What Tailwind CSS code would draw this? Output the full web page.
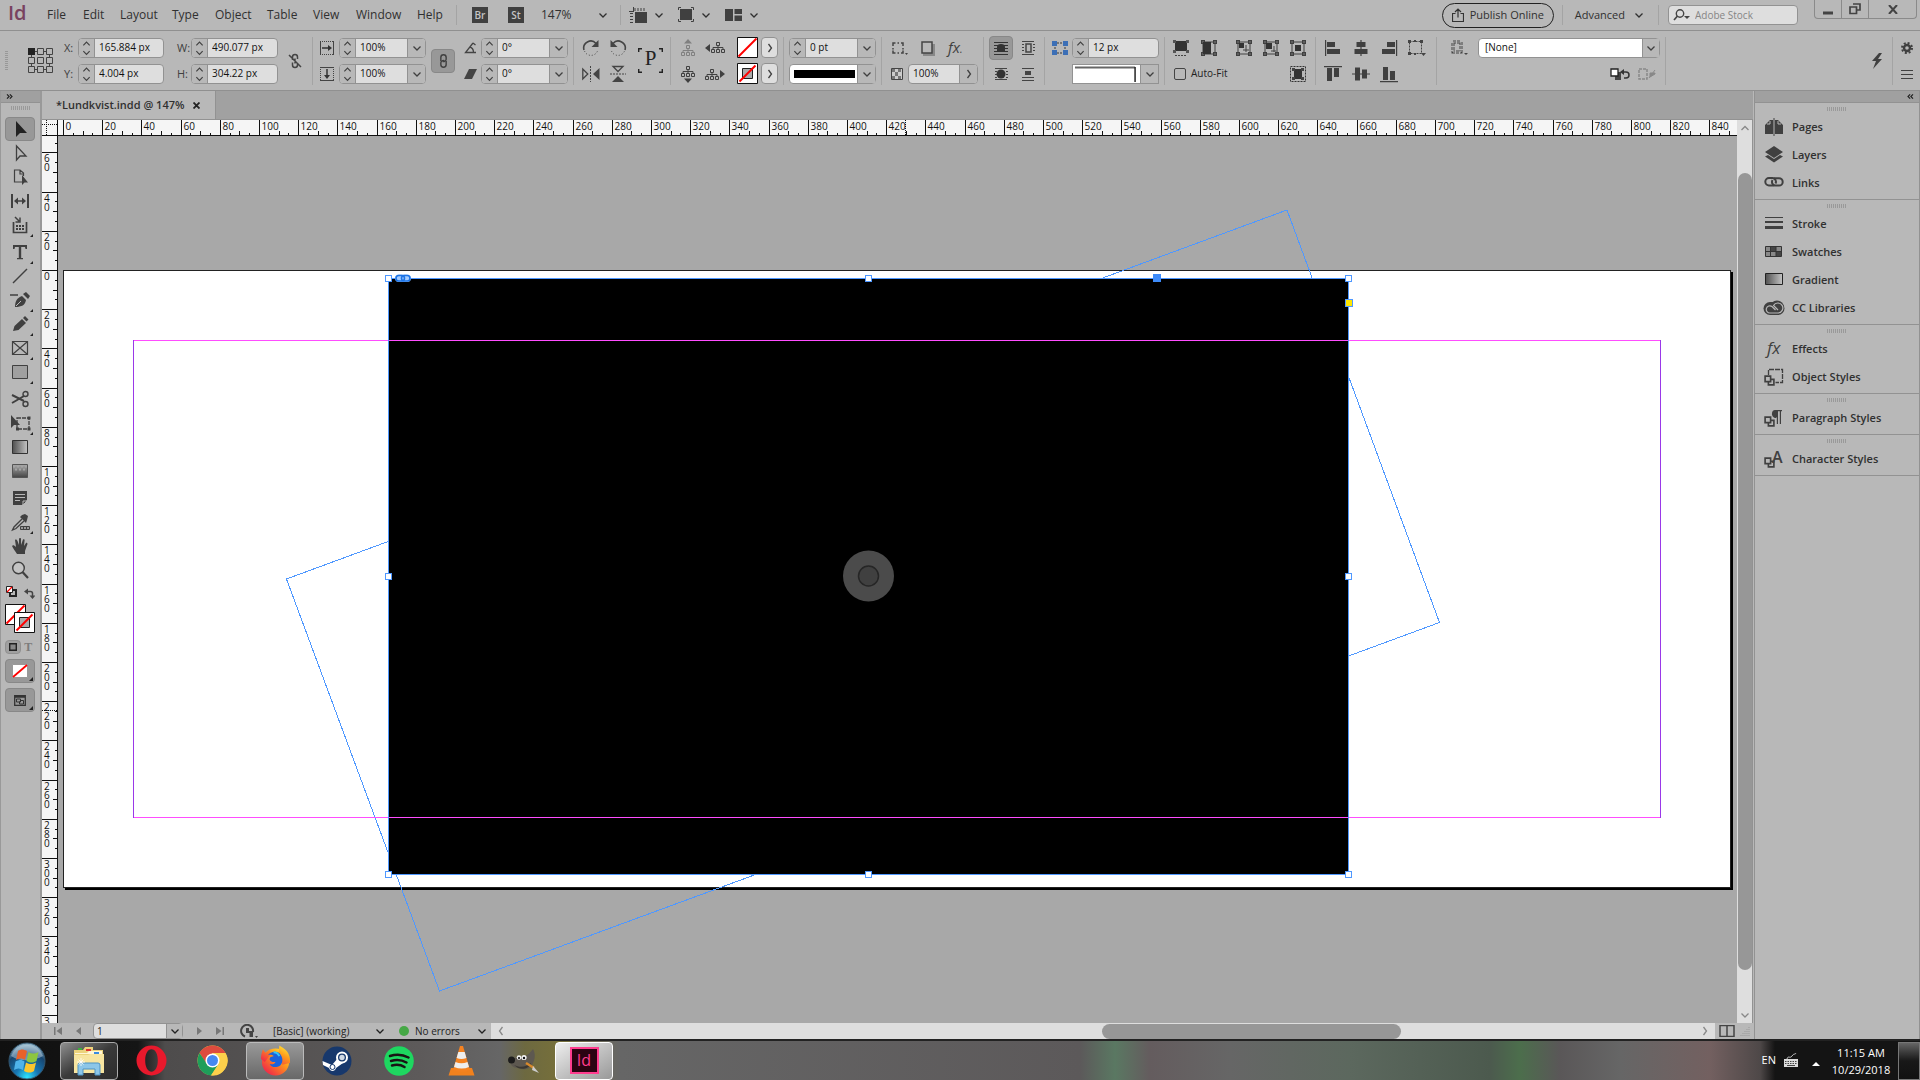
<!DOCTYPE html>
<html lang="en">
<head>
    <meta charset="UTF-8">
    <meta name="viewport" content="width=device-width, initial-scale=1.0">
    <title>*Lundkvist.indd @ 147%</title>
    <script src="https://cdn.jsdelivr.net/npm/@tailwindcss/browser@4"></script>
</head>
<body class="h-screen flex flex-col overflow-hidden bg-[#b8b8b8] text-[#303030] font-['Open_Sans','Noto_Sans',sans-serif]">

    <!-- shared icons -->
    <svg class="absolute size-0" xmlns="http://www.w3.org/2000/svg">
        <defs>
            <linearGradient id="grad"><stop offset="0" stop-color="#505050"/><stop offset="1" stop-color="#c4c4c4"/></linearGradient>
            <linearGradient id="feather" x2="0" y2="1"><stop offset="0" stop-color="#aaa"/><stop offset="1" stop-color="#444"/></linearGradient>
        </defs>
        <symbol id="down" viewBox="0 0 10 10"><path d="M1.5 3.5 5 7l3.500-3.500" fill="none" stroke="currentColor" stroke-width="1.300"/></symbol>
        <symbol id="up" viewBox="0 0 10 10"><path d="M1.500 7 5 3.500 8.500 7" fill="none" stroke="currentColor" stroke-width="1.300"/></symbol>
        <symbol id="right" viewBox="0 0 10 10"><path d="M3.500 1 6.500 5 3.500 9" fill="none" stroke="currentColor" stroke-width="1.300"/></symbol>
        <symbol id="left" viewBox="0 0 10 10"><path d="M6.500 1 3.500 5l3 4" fill="none" stroke="currentColor" stroke-width="1.300"/></symbol>
        <symbol id="gripv" viewBox="0 0 3 20"><path d="M1.500 0v20" stroke="#989898" stroke-width="3" stroke-dasharray="1 1"/></symbol>
        <symbol id="griph" viewBox="0 0 20 4"><path d="M0 2h20" stroke="#999" stroke-width="4" stroke-dasharray="1 1"/></symbol>
        <symbol id="links" viewBox="0 0 20 12"><g fill="none" stroke="currentColor" stroke-width="2"><path d="M10.500 9.500H5a3.700 3.700 0 0 1 0-7.400h3.500a3.700 3.700 0 0 1 3 5.500"/><path d="M9.500 2.200H15a3.700 3.700 0 0 1 0 7.400h-3.500a3.700 3.700 0 0 1-3-5.500"/></g></symbol>
        <symbol id="chain" viewBox="0 0 10 18"><g fill="none" stroke="currentColor" stroke-width="1.600"><path d="M2 9V5a3 3 0 0 1 6 0v2a3 3 0 0 1-4 2.500"/><path d="M8 9v4a3 3 0 0 1-6 0v-2a3 3 0 0 1 4-2.500"/></g></symbol>
        <symbol id="tree" viewBox="0 0 14 11"><g fill="none" stroke="currentColor"><path d="M5.500.5h3v3h-3zM.5 7.500h3v3h-3zM5.500 7.500h3v3h-3zM10.500 7.500h3v3h-3zM7 3.500v4M2 7.500v-2h10v2"/></g></symbol>
        <symbol id="frame" viewBox="0 0 18 18"><path d="M3 3h12v12H3z" fill="none" stroke="currentColor"/><path d="M1 1h4v4H1zM13 1h4v4h-4zM1 13h4v4H1zM13 13h4v4h-4z" fill="currentColor"/><path d="M2.500 2.500h1v1h-1zM14.500 2.500h1v1h-1zM2.500 14.500h1v1h-1zM14.500 14.500h1v1h-1z" fill="#b8b8b8"/></symbol>
        <symbol id="none" viewBox="0 0 21 21"><path d="M.5.5h20v20H.5z" fill="#fff" stroke="#111"/><path d="M1.500 19.500l18-18" stroke="#f00" stroke-width="2"/></symbol>
        <symbol id="nonestroke" viewBox="0 0 21 21"><path d="M.5.5h20v20H.5z" fill="#fff" stroke="#111"/><path d="M5.500 5.500h10v10h-10z" fill="#aaa" stroke="#222"/><path d="M2.500 18.500l16-16" stroke="#f00" stroke-width="2"/></symbol>
        <symbol id="corner" viewBox="0 0 4 4"><path d="M4 0v4H0z" fill="#222"/></symbol>
        <symbol id="mini" viewBox="0 0 10 10"><path d="M1 1h5v5H1zM4 6.500V9h5V4H6.500" fill="none" stroke="currentColor" stroke-width="1.500"/></symbol>
    </svg>

    <!-- menu bar -->
    <header class="h-[31px] shrink-0 border-b border-[#909090] flex items-center text-[12px]">
        <span class="w-[47px] pl-2 pb-1 text-[20px] leading-5 font-semibold text-[#78425f]">Id</span>
        <nav class="flex w-[409px]">
            <a href="#" class="w-[36px]">File</a>
            <a href="#" class="w-[37px]">Edit</a>
            <a href="#" class="w-[52px]">Layout</a>
            <a href="#" class="w-[43px]">Type</a>
            <a href="#" class="w-[52px]">Object</a>
            <a href="#" class="w-[46px]">Table</a>
            <a href="#" class="w-[43px]">View</a>
            <a href="#" class="w-[61px]">Window</a>
            <a href="#">Help</a>
        </nav>
        <span class="w-px h-5 bg-[#a4a4a4]"></span>
        <button class="ml-[15px] size-4 bg-[#404040] text-[#c4c4c4] text-[10px] leading-4 font-semibold">Br</button>
        <button class="ml-5 size-4 bg-[#404040] text-[#c4c4c4] text-[10px] leading-4 font-semibold">St</button>
        <button class="ml-[17px] flex items-center justify-between w-[67px]" aria-label="Zoom level">147% <svg class="size-[10px]"><use href="#down"/></svg></button>
        <span class="ml-3 w-px h-5 bg-[#a4a4a4]"></span>
        <button class="ml-2 flex items-center gap-[7px]" aria-label="View options">
            <svg class="w-[18px] h-4" viewBox="0 0 18 16"><path d="M6 5h12v11H6z" fill="#404040"/><path d="M5.500 2.500h12" stroke="#404040" stroke-width="3" stroke-dasharray="1 2"/><path d="M2.500 6v10" stroke="#404040" stroke-width="3" stroke-dasharray="1 2"/><path d="M0 4.500h5M4.500 0v5" stroke="#404040"/></svg>
            <svg class="size-[10px]"><use href="#down"/></svg>
        </button>
        <button class="ml-[14px] flex items-center gap-[7px]" aria-label="Screen mode">
            <svg class="size-4" viewBox="0 0 16 16"><path d="M2 2h12v11H2z" fill="#404040"/><path d="M.5 3V.5H3M13 .5h2.500V3M.5 12v2.500H3M13 14.500h2.500V12" fill="none" stroke="#404040"/></svg>
            <svg class="size-[10px]"><use href="#down"/></svg>
        </button>
        <button class="ml-[14px] flex items-center gap-[7px]" aria-label="Arrange documents">
            <svg class="w-[17px] h-3" viewBox="0 0 17 12"><path d="M0 0h8v12H0zM9.500 0H17v5H9.500zM9.500 6.500H17V12H9.500z" fill="#404040"/></svg>
            <svg class="size-[10px]"><use href="#down"/></svg>
        </button>
        <button class="ml-auto h-[25px] w-[112px] rounded-full border border-[#222] flex items-center justify-center gap-1.5 text-[11px]">
            <svg class="w-3 h-[14px]" viewBox="0 0 12 14"><path d="M3.500 5.500h-3v8h11v-8h-3M6 9.500V1M3 4l3-3 3 3" fill="none" stroke="#333" stroke-width="1.200"/></svg>
            Publish Online
        </button>
        <span class="ml-2 w-px h-5 bg-[#a4a4a4]"></span>
        <button class="ml-3 flex items-center gap-[9px] text-[11px]">Advanced <svg class="size-[10px]"><use href="#down"/></svg></button>
        <span class="ml-[14px] w-px h-5 bg-[#a4a4a4]"></span>
        <label class="ml-[9px] w-[130px] h-5 flex items-center gap-1 pl-1 rounded-sm border border-[#929292] bg-[#dedede]">
            <svg class="w-[18px] h-3" viewBox="0 0 18 12"><circle cx="7" cy="4.500" r="3.700" fill="none" stroke="#444" stroke-width="1.400"/><path d="M4.500 7 1 11" stroke="#444" stroke-width="1.600"/><path d="M11 7h6l-3 3z" fill="#444"/></svg>
            <input type="search" aria-label="Search Adobe Stock" placeholder="Adobe Stock" class="w-20 text-[10px] placeholder:text-[#858585] outline-none">
        </label>
        <div class="ml-4 mr-[3px] self-start flex h-[19px] border border-t-0 border-[#8a8a8a] rounded-b-sm">
            <button class="w-[27px] border-r border-[#8a8a8a] flex justify-center items-center" aria-label="Minimize"><svg class="w-[10px] h-3" viewBox="0 0 10 12"><path d="M0 8.500h10v3H0z" fill="#444"/></svg></button>
            <button class="w-[27px] border-r border-[#8a8a8a] flex justify-center items-center" aria-label="Restore"><svg class="w-3 h-3" viewBox="0 0 12 12"><path d="M4 1h7v6H8M1 4h6.500v6.500H1z" fill="none" stroke="#444" stroke-width="1.700"/></svg></button>
            <button class="w-[47px] flex justify-center items-center" aria-label="Close"><svg class="w-[10px] h-[9px]" viewBox="0 0 10 9"><path d="M1 0l8 9M9 0 1 9" stroke="#444" stroke-width="2"/></svg></button>
        </div>
    </header>

    <!-- control panel -->
    <section class="h-[60px] shrink-0 border-b border-[#909090] flex items-center text-[10px] text-[#404040]">
        <svg class="ml-[5px] w-[3px] h-5"><use href="#gripv"/></svg>
        <button class="ml-5" aria-label="Reference point"><svg class="size-[25px]" viewBox="0 0 25 25"><path d="M3.500 3.500h18v18h-18z" fill="none" stroke="#444"/><g fill="#b8b8b8" stroke="#444"><path d="M9.500.5h6v6h-6zM18.500.5h6v6h-6zM.5 9.500h6v6h-6zM9.500 9.500h6v6h-6zM18.500 9.500h6v6h-6zM.5 18.500h6v6h-6zM9.500 18.500h6v6h-6zM18.500 18.500h6v6h-6z"/></g><path d="M0 0h7v7H0z" fill="#222"/></svg></button>
        <div class="ml-[11px] flex flex-col gap-1.5 w-[100px]">
            <div data-field="X position" data-label="X:" data-value="165.884 px"></div>
            <div data-field="Y position" data-label="Y:" data-value="4.004 px"></div>
        </div>
        <div class="ml-[13px] flex flex-col gap-1.5 w-[101px]">
            <div data-field="Width" data-label="W:" data-value="490.077 px"></div>
            <div data-field="Height" data-label="H:" data-value="304.22 px"></div>
        </div>
        <button class="ml-[10px]" aria-label="Constrain proportions"><svg class="w-[14px] h-[18px]" viewBox="0 0 14 18"><g fill="none" stroke="#444" stroke-width="1.500"><path d="M4.500 8V5a2.500 2.500 0 0 1 5 0v2M4.500 10.500V13a2.500 2.500 0 0 0 5 0v-2M7 6.500v5M1 3l12 12"/></g></svg></button>
        <span class="ml-[10px] w-px h-12 bg-[#a4a4a4]"></span>
        <div class="ml-[7px] flex gap-[5px]">
            <div class="flex flex-col gap-3 py-[3px]">
                <svg class="size-[14px]" viewBox="0 0 14 14"><path d="M.5 0v14M13.500 0v14" stroke="#444"/><path d="M0 .5h14M0 13.500h14" stroke="#444" stroke-dasharray="1 1"/><path d="M2 7h7" stroke="#333" stroke-width="1.500"/><path d="M8 4l4 3-4 3z" fill="#333"/></svg>
                <svg class="size-[14px]" viewBox="0 0 14 14"><path d="M0 .5h14M0 13.500h14" stroke="#444"/><path d="M.5 0v14M13.500 0v14" stroke="#444" stroke-dasharray="1 1"/><path d="M7 2v7" stroke="#333" stroke-width="1.500"/><path d="M4 8l3 4 3-4z" fill="#333"/></svg>
            </div>
            <div class="flex flex-col gap-1.5 w-[87px]">
                <div data-field="Scale X" data-value="100%" data-menu="down"></div>
                <div data-field="Scale Y" data-value="100%" data-menu="down"></div>
            </div>
        </div>
        <button class="ml-[5px] w-6 h-6 rounded-sm border border-[#888] bg-[#989898] flex items-center justify-center" aria-label="Link scale"><svg class="w-[9px] h-4"><use href="#chain"/></svg></button>
        <div class="ml-[9px] flex gap-1">
            <div class="flex flex-col gap-3 py-[3px]">
                <svg class="w-[13px] h-[14px]" viewBox="0 0 13 14"><path d="M9 2 1.500 11.500H12M5.500 6c3 .5 4 3 4 5.500M9 2l2.500 2" fill="none" stroke="#444" stroke-width="1.300"/></svg>
                <svg class="w-[13px] h-[14px]" viewBox="0 0 13 14"><path d="M5 2h8L8 12H0z" fill="#444"/></svg>
            </div>
            <div class="flex flex-col gap-1.5 w-[87px]">
                <div data-field="Rotation" data-value="0°" data-menu="down"></div>
                <div data-field="Shear" data-value="0°" data-menu="down"></div>
            </div>
        </div>
        <span class="ml-[5px] w-px h-12 bg-[#a4a4a4]"></span>
        <div class="ml-2 grid grid-cols-2 gap-x-[9px] gap-y-2">
            <svg class="size-[18px]" viewBox="0 0 18 18"><path d="M2 11a7 7 0 0 1 12-6.500" fill="none" stroke="#444" stroke-width="1.600"/><path d="M16.500 1v7h-7z" fill="#444"/><path d="M2.500 12a7 7 0 0 0 13 0" fill="none" stroke="#444" stroke-dasharray="1 2"/></svg>
            <svg class="size-[18px]" viewBox="0 0 18 18"><path d="M16 11A7 7 0 0 0 4 4.500" fill="none" stroke="#444" stroke-width="1.600"/><path d="M1.500 1v7h7z" fill="#444"/><path d="M2.500 12a7 7 0 0 0 13 0" fill="none" stroke="#444" stroke-dasharray="1 2"/></svg>
            <svg class="size-[18px]" viewBox="0 0 18 18"><path d="M.8 4v10l5-5z" fill="none" stroke="#444" stroke-width="1.300"/><path d="M17.500 3v12L11 9z" fill="#444"/><path d="M8.500 1v16" stroke="#444" stroke-dasharray="2 1"/></svg>
            <svg class="size-[18px]" viewBox="0 0 18 18"><path d="M4 1.500h10L9 6.500z" fill="none" stroke="#444" stroke-width="1.300"/><path d="M3 17h12l-6-6z" fill="#444"/><path d="M1 9h16" stroke="#444" stroke-dasharray="2 1"/></svg>
        </div>
        <div class="ml-[11px] size-[25px] flex items-center justify-center relative">
            <svg class="absolute inset-0 size-full" viewBox="0 0 25 25"><path d="M.7 4V.7H4M21 .7h3.300V4M.7 21v3.300H4M21 24.300h3.300V21" fill="none" stroke="#222" stroke-width="1.400"/></svg>
            <span class="pb-1 text-[21px] leading-none font-['Liberation_Serif',serif] text-[#222]">P</span>
        </div>
        <span class="ml-[7px] w-px h-12 bg-[#a4a4a4]"></span>
        <div class="ml-[9px] grid grid-cols-[16px_20px] gap-x-[9px] gap-y-2">
            <svg class="w-4 h-[18px] text-[#808080]" viewBox="0 0 16 18"><path d="M4 4.500h8L8 0z" fill="currentColor"/><use href="#tree" x="1" y="6" width="14" height="11"/></svg>
            <svg class="w-5 h-[18px]" viewBox="0 0 20 18"><path d="M5 5v8L0 9z" fill="currentColor"/><use href="#tree" x="6" y="3" width="14" height="11"/></svg>
            <svg class="w-4 h-[18px]" viewBox="0 0 16 18"><path d="M4 13.500h8L8 18z" fill="currentColor"/><use href="#tree" x="1" y="1" width="14" height="11"/></svg>
            <svg class="w-5 h-[18px]" viewBox="0 0 20 18"><path d="M15 5v8l5-4z" fill="currentColor"/><use href="#tree" x="0" y="4" width="14" height="11"/></svg>
        </div>
        <div class="ml-3 grid grid-cols-[21px_17px] gap-x-[3px] gap-y-[5px]">
            <button aria-label="Fill"><svg class="size-[21px]"><use href="#none"/></svg></button>
            <button class="rounded-sm border border-[#929292] bg-[#dedede] flex items-center justify-center" aria-label="Fill options"><svg class="size-[10px]"><use href="#right"/></svg></button>
            <button aria-label="Stroke"><svg class="size-[21px]"><use href="#nonestroke"/></svg></button>
            <button class="rounded-sm border border-[#929292] bg-[#dedede] flex items-center justify-center" aria-label="Stroke options"><svg class="size-[10px]"><use href="#right"/></svg></button>
        </div>
        <span class="ml-[5px] w-px h-12 bg-[#a4a4a4]"></span>
        <div class="ml-[5px] flex flex-col gap-1.5 w-[87px]">
            <div data-field="Stroke weight" data-value="0 pt" data-menu="down"></div>
            <button class="h-5 border border-[#929292] rounded-sm bg-white flex items-center justify-between" aria-label="Stroke type"><span class="ml-1 w-[61px] h-2 bg-black"></span><span class="w-[18px] h-full border-l border-[#929292] bg-[#b8b8b8] flex items-center justify-center"><svg class="size-[10px]"><use href="#down"/></svg></span></button>
        </div>
        <span class="ml-[5px] w-px h-12 bg-[#a4a4a4]"></span>
        <div class="ml-2 flex flex-col gap-1.5 w-[88px]">
            <div class="h-5 flex items-center gap-[11px]">
                <svg class="size-[18px]" viewBox="0 0 18 18"><path d="M3 4h10v10H3z" fill="none" stroke="#444" stroke-width="1.500"/><path d="M5.500 3h2v2h-2zM9 3h2v2H9zM5.500 13h2v2h-2zM9 13h2v2H9zM2 7h2v2H2zM12 7h2v2h-2zM2 10.500h2v1H2zM12 10.500h2v1h-2z" fill="#b8b8b8"/><path d="M15 14h3l-1.500 2z" fill="#444"/></svg>
                <svg class="size-[18px]" viewBox="0 0 18 18"><path d="M4 5h12v12H4z" fill="#888"/><path d="M3 3h10v11H3z" fill="#b8b8b8" stroke="#444" stroke-width="1.500"/></svg>
                <span class="text-[15px] italic leading-4">fx<span class="text-[10px]">.</span></span>
            </div>
            <div class="h-5 flex items-center">
                <svg class="w-[14px] h-3 mr-1" viewBox="0 0 14 12"><path d="M1.500.5h11v11h-11z" fill="#ccc" stroke="#444"/><path d="M2 1h3v3H2zM8 1h3v3H8zM5 4h3v4H5zM2 8h3v3H2zM8 8h3v3H8z" fill="#777"/></svg>
                <div class="w-[70px]" data-field="Opacity" data-value="100%" data-menu="right" data-plain="1"></div>
            </div>
        </div>
        <span class="ml-[5px] w-px h-12 bg-[#a4a4a4]"></span>
        <div class="ml-[5px] grid grid-cols-[24px_18px] grid-rows-[24px_24px] gap-x-1.5 gap-y-0.5 items-center">
            <button class="size-6 rounded-sm border border-[#888] bg-[#989898] flex items-center justify-center" aria-label="No text wrap"><svg class="size-[14px]" viewBox="0 0 14 14"><path d="M0 1.500h14M0 4.500h14M0 7.500h14M0 10.500h14M0 13.500h14" stroke="#333"/><path d="M7 3a4 3 0 0 1 4 3v5H3V6a4 3 0 0 1 4-3" fill="#333"/></svg></button>
            <svg class="size-[18px]" viewBox="0 0 18 18"><path d="M3 2.500h12M3 15.500h12M3 5.500h2M3 8.500h2M3 11.500h2M14 5.500h2M14 8.500h2M14 11.500h2" stroke="#444"/><path d="M7 5h5v8H7z" fill="none" stroke="#444" stroke-width="1.500"/></svg>
            <svg class="size-[18px] ml-[3px]" viewBox="0 0 18 18"><path d="M3 3.500h12M3 14.500h12M3 6.500h2M3 9.500h2M3 12.500h2M14 6.500h2M14 9.500h2M14 12.500h2" stroke="#444"/><circle cx="9" cy="9" r="4.500" fill="#333"/></svg>
            <svg class="size-[18px]" viewBox="0 0 18 18"><path d="M3 3.500h12M3 12.500h12M3 15.500h12" stroke="#444"/><path d="M6 6h6v4H6z" fill="#444"/></svg>
        </div>
        <span class="ml-[7px] w-px h-12 bg-[#a4a4a4]"></span>
        <div class="ml-[7px] flex gap-1">
            <svg class="w-4 h-5" viewBox="0 0 16 20"><path d="M3 6v8M13 6v8M5 5h6M5 15h6" stroke="#777" stroke-width="2" stroke-dasharray="2 1"/><path d="M0 3h5v5H0zM11 3h5v5h-5zM0 12h5v5H0zM11 12h5v5h-5z" fill="#3c6fb6"/></svg>
            <div class="flex flex-col gap-1.5 w-[87px]">
                <div data-field="Corner size" data-value="12 px"></div>
                <button class="h-5 border border-[#929292] bg-white flex items-center justify-between" aria-label="Corner shape"><svg class="flex-1 h-4" viewBox="0 0 68 16"><path d="M2 1.500h61" stroke="#666" stroke-width="2"/><path d="M63 1v15" stroke="#222" stroke-width="1.500"/></svg><span class="w-[18px] h-full border-l border-[#929292] bg-[#b8b8b8] flex items-center justify-center"><svg class="size-[10px]"><use href="#down"/></svg></span></button>
            </div>
        </div>
        <span class="ml-[5px] w-px h-12 bg-[#a4a4a4]"></span>
        <div class="ml-[7px] flex flex-col gap-1.5 w-[56px]">
            <div class="h-5 flex items-center gap-[10px]">
                <svg class="size-[18px]" viewBox="0 0 18 18"><path d="M3 2h12v10H3z" fill="#333"/><path d="M1 1h3v3H1zM14 1h3v3h-3zM1 11h3v3H1zM14 11h3v3h-3z" fill="#555"/><path d="M3 16.500h12" stroke="#444" stroke-dasharray="2 1"/></svg>
                <svg class="size-[18px]" viewBox="0 0 18 18"><use href="#frame" width="18" height="18"/><path d="M3 3h8v12H3z" fill="#333"/></svg>
            </div>
            <label class="h-5 flex items-center gap-[5px] whitespace-nowrap text-[#222]"><input type="checkbox" class="appearance-none ml-0.5 size-3 shrink-0 border border-[#444] rounded-xs">Auto-Fit</label>
        </div>
        <div class="ml-[7px] grid grid-cols-3 gap-x-[9px] gap-y-2">
            <svg class="size-[18px]" viewBox="0 0 18 18"><use href="#frame" width="18" height="18"/><path d="M4 4h5v5H4z" fill="#333"/><path d="M11 6v7M8 11h6" stroke="#444"/></svg>
            <svg class="size-[18px]" viewBox="0 0 18 18"><use href="#frame" width="18" height="18"/><path d="M4 4h6v6H4z" fill="#333"/><path d="M12 7v6M9 12h5" stroke="#444"/></svg>
            <svg class="size-[18px]" viewBox="0 0 18 18"><use href="#frame" width="18" height="18"/><path d="M6 6h6v6H6z" fill="#333"/></svg>
            <svg class="size-[18px] col-start-3" viewBox="0 0 18 18"><path d="M1.500 1.500h15v15h-15z" fill="none" stroke="#333" stroke-dasharray="2 1"/><path d="M5 4h8v10H5z" fill="#333"/><path d="M3 3h3v3H3zM12 3h3v3h-3zM3 12h3v3H3zM12 12h3v3h-3z" fill="#444"/></svg>
        </div>
        <span class="ml-2 w-px h-12 bg-[#a4a4a4]"></span>
        <div class="ml-2 grid grid-cols-4 gap-x-[10px] gap-y-2">
            <svg class="size-[18px]" viewBox="0 0 18 18"><path d="M1 1h1.200v16H1zM3 3h8v5H3zM3 10h13v5H3z" fill="#404040"/></svg>
            <svg class="size-[18px]" viewBox="0 0 18 18"><path d="M8.400 1h1.200v16H8.400zM4.500 3h9v5h-9zM2.500 10h13v5h-13z" fill="#404040"/></svg>
            <svg class="size-[18px]" viewBox="0 0 18 18"><path d="M16 1h1.200v16H16zM7 3h8v5H7zM2 10h13v5H2z" fill="#404040"/></svg>
            <svg class="size-[18px]" viewBox="0 0 18 18"><path d="M1.500 2.500h12v12h-12z" fill="none" stroke="#444" stroke-dasharray="2 1"/><path d="M0 1h3v3H0zM12 1h3v3h-3zM0 13h3v3H0zM6 1h2v2H6zM6 14h2v2H6zM13 14h5l-2.500 3z" fill="#444"/></svg>
            <svg class="size-[18px]" viewBox="0 0 18 18"><path d="M0 1h18v1.200H0zM3 3h5v13H3zM10 3h5v9h-5z" fill="#404040"/></svg>
            <svg class="size-[18px]" viewBox="0 0 18 18"><path d="M0 8.400h18v1.200H0zM3 2.500h5v13H3zM10 4.500h5v9h-5z" fill="#404040"/></svg>
            <svg class="size-[18px]" viewBox="0 0 18 18"><path d="M0 16h18v1.200H0zM3 2h5v13H3zM10 6h5v9h-5z" fill="#404040"/></svg>
        </div>
        <span class="ml-[10px] w-px h-12 bg-[#a4a4a4]"></span>
        <div class="ml-[13px] flex flex-col gap-1.5">
            <div class="h-5 flex items-center gap-[10px]">
                <svg class="size-[18px]" viewBox="0 0 18 18"><path d="M3 3h8v10H3z" fill="none" stroke="#444" stroke-width="3" stroke-dasharray="3 1"/><path d="M3 3h8v10H3z" fill="none" stroke="#b8b8b8"/><path d="M14 14h4l-2 2z" fill="#444"/></svg>
                <div class="relative w-[182px] h-5">
                    <select aria-label="Object style" class="appearance-none w-full h-5 pl-[6px] border border-[#929292] rounded-sm bg-white text-[#111] outline-none"><option>[None]</option></select>
                    <span class="absolute right-px top-px w-[17px] h-[18px] border-l border-[#929292] bg-[#b8b8b8] flex items-center justify-center pointer-events-none"><svg class="size-[10px]"><use href="#down"/></svg></span>
                </div>
            </div>
            <div class="h-5 flex items-center justify-end gap-2 pr-1">
                <svg class="w-5 h-[14px]" viewBox="0 0 20 14"><path d="M5 5h6v8H5z" fill="#444"/><path d="M1 2h7v7H1z" fill="#fff" stroke="#222" stroke-width="1.300"/><path d="M12 5h4a3 3 0 0 1 0 6h-2" fill="none" stroke="#333" stroke-width="1.500"/><path d="M14 2v6l-4-3z" fill="#333"/></svg>
                <svg class="w-[18px] h-[14px]" viewBox="0 0 18 14"><path d="M1 2h8v10H1z" fill="none" stroke="#888" stroke-width="1.500" stroke-dasharray="3 1"/><path d="M11 11l6-8M12 6h5v1l-5 3z" stroke="#888" fill="#888"/></svg>
            </div>
        </div>
        <span class="ml-[5px] w-px h-12 bg-[#a4a4a4]"></span>
        <button class="ml-auto" aria-label="Quick apply"><svg class="w-3 h-4" viewBox="0 0 12 16"><path d="M8 0 1 8h4l-3 8 9-10H7l4-6z" fill="#404040"/></svg></button>
        <span class="ml-[9px] w-px h-12 bg-[#a4a4a4]"></span>
        <div class="ml-2 mr-[7px] flex flex-col gap-4 items-center">
            <button aria-label="Customize"><svg class="size-3" viewBox="0 0 12 12"><circle cx="6" cy="6" r="3" fill="none" stroke="#404040" stroke-width="2.400"/><circle cx="6" cy="6" r="5" fill="none" stroke="#404040" stroke-width="2" stroke-dasharray="2 1.930"/></svg></button>
            <button aria-label="Panel menu"><svg class="w-3 h-[9px]" viewBox="0 0 12 9"><path d="M0 .5h12M0 4.500h12M0 8.500h12" stroke="#404040"/></svg></button>
        </div>
    </section>

    <main class="flex-1 min-h-0 flex">
        <!-- tools -->
        <aside class="w-[42px] shrink-0 flex flex-col border-r-2 border-l border-[#999] text-[#404040]">
            <div class="h-3 shrink-0 bg-[#a0a0a0] border-b border-[#929292] flex items-center pl-[5px]"><svg class="w-[7px] h-[5px]" viewBox="0 0 8 7"><path d="M.5.5l3 3-3 3M4.500.5l3 3-3 3" fill="none" stroke="#222" stroke-width="1.600"/></svg></div>
            <svg class="mt-[3px] mb-[7px] mx-auto w-5 h-1 shrink-0"><use href="#griph"/></svg>
            <div id="tools" class="flex flex-col px-1 gap-[3px]"></div>
            <div class="flex justify-between px-[5px] pt-1 h-[18px]">
                <svg class="w-[11px] h-[11px]" viewBox="0 0 11 11"><path d="M4 4h6v6H4z" fill="none" stroke="#222" stroke-width="2"/><path d="M.5.5h6v6h-6z" fill="#fff" stroke="#222"/><path d="M1 6l5-5" stroke="#f00" stroke-width="1.300"/></svg>
                <svg class="w-[11px] h-[11px] mt-0.5" viewBox="0 0 11 11"><path d="M2 3.500h4.500a2 2 0 0 1 2 2V9" fill="none" stroke="#444" stroke-width="1.500"/><path d="M4 .5v6l-4-3zM5.500 7.500h6l-3 3.500z" fill="#444"/></svg>
            </div>
            <div class="relative mx-1 h-[31px] w-[30px] mt-1 shrink-0">
                <svg class="absolute left-0 top-0 size-[21px]"><use href="#none"/></svg>
                <svg class="absolute right-0 bottom-0.5 size-[21px]"><use href="#nonestroke"/></svg>
            </div>
            <div class="flex px-1 mt-[5px] items-center">
                <button class="w-4 h-[14px] rounded-sm border border-[#909090] bg-[#a0a0a0] flex items-center justify-center" aria-label="Formatting affects container"><svg class="size-2" viewBox="0 0 8 8"><path d="M.7.7h6.600v6.600H.7z" fill="#888" stroke="#222" stroke-width="1.400"/></svg></button>
                <button class="w-4 h-[14px] text-[12px] leading-[14px] font-bold font-['Liberation_Serif',serif] text-[#7c7c7c]">T</button>
            </div>
            <button class="relative mx-1 mt-[5px] w-[30px] h-6 shrink-0 rounded-sm border border-[#888] bg-[#989898] flex items-center justify-center" aria-label="Apply none"><svg class="size-4" viewBox="0 0 16 16"><path d="M.5 1.500h15v13H.5z" fill="#fff" stroke="#999"/><path d="M1 14 15 2" stroke="#f00" stroke-width="1.800"/></svg><svg class="absolute right-px bottom-px size-1"><use href="#corner"/></svg></button>
            <button class="relative mx-1 mt-[5px] w-[30px] h-6 shrink-0 rounded-sm border border-[#888] bg-[#989898] flex items-center justify-center" aria-label="Screen mode"><svg class="w-3 h-[11px]" viewBox="0 0 12 11"><path d="M.7.7h10.600v9.600H.7zM.7 2h10.600" fill="none" stroke="#333" stroke-width="1.300"/><path d="M2.500 4h4v3h-4zM5.500 6.500V9h4V5.500h-3" fill="none" stroke="#333"/></svg><svg class="absolute right-px bottom-px size-1"><use href="#corner"/></svg></button>
        </aside>

        <!-- document window -->
        <section class="flex-1 min-w-0 flex flex-col">
            <div class="h-[29px] shrink-0 bg-[#a1a1a1] border-b border-[#929292] flex">
                <div class="w-[174px] bg-[#b8b8b8] border-r border-[#929292] flex items-center pt-px pl-[14px] gap-2 text-[11px] font-semibold whitespace-nowrap">*Lundkvist.indd @ 147%
                    <button aria-label="Close document"><svg class="size-[7px]" viewBox="0 0 7 7"><path d="M.5.5l6 6M6.500.5l-6 6" stroke="#222" stroke-width="1.800"/></svg></button>
                </div>
            </div>
            <div class="flex-1 min-h-0 flex">
                <div class="flex-1 min-w-0 grid grid-cols-[16px_1fr] grid-rows-[16px_1fr]">
                    <svg class="size-4 bg-[#f5f5f5]" viewBox="0 0 16 16"><path d="M0 4.500h15M4.500 0v15" stroke="#111" stroke-dasharray="1 1"/><path d="M15.500 0v16M0 15.500h16" stroke="#111"/></svg>
                    <svg id="rulerX" class="w-full h-4 bg-[#f5f5f5] text-[10px]"></svg>
                    <svg id="rulerY" class="w-4 h-full bg-[#f5f5f5] text-[10px]"></svg>
                    <div class="relative overflow-hidden bg-[#a8a8a8]">
                        <!-- pasteboard: the page with its margins and the selected, rotated picture -->
                        <svg class="absolute left-0 top-0 w-[1680px] h-[888px]" viewBox="58 136 1680 888" shape-rendering="crispEdges">
                            <path d="M65 272h1668v618H65z" fill="#000"/>
                            <path d="M63.500 270.500h1667v617h-1667z" fill="#fff" stroke="#222"/>
                            <path d="M286.500 579 1287 210 1439.500 622.500 439.500 991z" fill="none" stroke="#4f98ff"/>
                            <path d="M388 278h960v596H388z" fill="#000"/>
                            <path d="M133 340.500h1528M133 817.500h1528" stroke="#ff4dff"/>
                            <path d="M133.500 340v478M1660.500 340v478" stroke="#9a38e8"/>
                            <path d="M388.500 278.500h960v596h-960z" fill="none" stroke="#4f98ff"/>
                            <g shape-rendering="auto"><circle cx="868.500" cy="576" r="25.500" fill="#4b4b4b"/><circle cx="868.500" cy="576" r="10" fill="#404040" stroke="#262626" stroke-width="1.500"/></g>
                            <g id="handles" fill="#fff" stroke="#4f98ff"></g>
                            <path d="M1153 274h8v8h-8z" fill="#3d8bfa"/>
                            <path d="M1345.500 299.500h7v7h-7z" fill="#ffe600" stroke="#4f98ff"/>
                            <g shape-rendering="auto"><rect x="395" y="274.500" width="16" height="7.500" rx="3.700" fill="#a4ccff"/><g fill="none" stroke="#1b73e6" stroke-width="1.600"><rect x="396" y="275.500" width="8.500" height="5.500" rx="2.700"/><rect x="401.500" y="275.500" width="8.500" height="5.500" rx="2.700"/></g></g>
                        </svg>
                    </div>
                </div>
                <!-- vertical scroll bar -->
                <div class="w-4 shrink-0 bg-[#dedede] border-r border-[#929292] flex flex-col items-center justify-between py-[3px] text-[#888]">
                    <svg class="size-[10px] shrink-0"><use href="#up"/></svg>
                    <span class="mt-10 mb-10 w-[14px] flex-1 rounded-full bg-[#979797]"></span>
                    <svg class="size-[10px] shrink-0"><use href="#down"/></svg>
                </div>
            </div>
            <!-- status bar -->
            <footer class="h-4 shrink-0 flex items-center text-[10px] text-[#222]">
                <svg class="ml-3 w-2 h-2" viewBox="0 0 8 8"><path d="M0 0h1.500v8H0zM8 0v8L2.500 4z" fill="#777"/></svg>
                <svg class="ml-[14px] w-[5px] h-2" viewBox="0 0 5 8"><path d="M5 0v8L0 4z" fill="#777"/></svg>
                <div class="ml-3 w-[90px] h-4 flex border border-[#929292] rounded-sm bg-[#dedede]">
                    <input aria-label="Page" value="1" class="w-[72px] pl-[3px] outline-none">
                    <button class="flex-1 border-l border-[#929292] bg-[#b8b8b8] flex items-center justify-center" aria-label="Choose page"><svg class="size-[10px]"><use href="#down"/></svg></button>
                </div>
                <svg class="ml-[14px] w-[5px] h-2" viewBox="0 0 5 8"><path d="M0 0v8l5-4z" fill="#777"/></svg>
                <svg class="ml-[14px] w-2 h-2" viewBox="0 0 8 8"><path d="M6.500 0H8v8H6.500zM0 0v8l5.500-4z" fill="#777"/></svg>
                <svg class="ml-4 w-[18px] h-[14px]" viewBox="0 0 18 14"><path d="M5 12.500A6 6 0 1 1 13 8" fill="none" stroke="#444" stroke-width="2"/><path d="M6 4h3v3h4v6H9.500V9H6z" fill="#444"/><path d="M15 12h3l-1.500 2z" fill="#444"/></svg>
                <button class="ml-[15px] w-[112px] flex items-center justify-between">[Basic] (working) <svg class="size-[10px]"><use href="#down"/></svg></button>
                <button class="ml-[14px] w-[88px] flex items-center"><span class="size-[10px] rounded-full bg-[#46a846] mr-1.5"></span>No errors <svg class="ml-auto size-[10px]"><use href="#down"/></svg></button>
                <div class="ml-1 flex-1 h-full bg-[#dedede] flex items-center justify-between px-[5px] text-[#888]">
                    <svg class="size-[10px]"><use href="#left"/></svg>
                    <span class="w-[299px] h-[15px] rounded-full bg-[#979797] ml-[596px]"></span>
                    <svg class="size-[10px] ml-auto"><use href="#right"/></svg>
                </div>
                <svg class="ml-1 w-4 h-3" viewBox="0 0 16 12"><path d="M1 .5h14v11H1zM8 .5v11" fill="none" stroke="#444" stroke-width="1.500"/></svg>
                <svg class="ml-[5px] mr-[3px] size-[10px]" viewBox="0 0 10 10"><path d="M9 1v9M7 3v7M5 5v5M3 7v3M1 9v1" stroke="#999" stroke-dasharray="1 1"/></svg>
            </footer>
        </section>

        <!-- panel dock -->
        <aside class="w-[166px] ml-px shrink-0 border-l border-r border-[#929292] text-[11px] font-semibold">
            <div class="h-3 bg-[#a0a0a0] border-b border-[#929292] flex items-center justify-end pr-[5px]"><svg class="w-[7px] h-[5px]" viewBox="0 0 8 7"><path d="M3.500.5l-3 3 3 3M7.500.5l-3 3 3 3" fill="none" stroke="#222" stroke-width="1.600"/></svg></div>
            <div id="panels"></div>
        </aside>
    </main>

    <!-- taskbar -->
    <footer class="h-[41px] shrink-0 border-t-2 border-[#222] flex items-center text-white text-[12px] bg-[linear-gradient(90deg,#101010_0,#151515_138px,#4e4c4c_165px,#5d5a5a_420px,#666_500px,#6d6940_525px,#77703a_560px,#666_620px,#5c595a_1080px,#5a7862_1115px,#645c5e_1150px,#666_1230px,#5c685e_1350px,#4c5a4e_1490px,#4c6e4c_1520px,#5a5758_1560px,#666_1620px,#736060_1710px,#4e4848_1760px,#141414_1775px)]">
        <button class="ml-[8px]" aria-label="Start"><svg class="size-[38px]" viewBox="0 0 38 38"><defs><radialGradient id="orb" cx=".5" cy=".95" r=".9"><stop offset="0" stop-color="#2ee6ff"/><stop offset=".35" stop-color="#1878b4"/><stop offset=".75" stop-color="#17456f"/><stop offset="1" stop-color="#8fb3c8"/></radialGradient></defs><circle cx="19" cy="19" r="18" fill="url(#orb)" stroke="#33566e"/><path d="M3 14a17 17 0 0 1 32 0c-8 5-24 6-32 0z" fill="#cfe0ea" opacity=".45"/><path d="M10 9c3-2 5-2 9 0l-2 9c-3-2-5-2-9 0z" fill="#e8622a"/><path d="M20.500 10c3 2 6 2 10 0l-2 9c-4 2-6 2-10 0z" fill="#8dc63f"/><path d="M7.500 19.500c4-2 6-2 9 0L15 28c-3-2-6-2-9 0z" fill="#4fb3ea"/><path d="M18 20.500c4 2 6 2 10 0L26 29c-3 2-6 2-10 0z" fill="#fcc62d"/></svg></button>
        <button class="ml-[14px] w-[58px] h-[38px] rounded-sm border border-[#aaa] bg-linear-to-br from-[#909090] via-[#3a3a3a] to-[#2c2c2c] flex items-center justify-center" aria-label="Explorer"><svg class="w-8 h-[30px]" viewBox="0 0 32 30"><path d="M1 4h9l2-3h8v3h10v23H1z" fill="#ecd37c"/><path d="M2 7h12l2-2h13v3H2z" fill="#fff6d5"/><path d="M5 2h4v2H5z" fill="#3caf3c"/><path d="M13 3h5v2h-5z" fill="#d33"/><path d="M21 6h5v2h-5z" fill="#3a8be0"/><path d="M1 9h14l2-1h14v19H1z" fill="#f7e5a0"/><path d="M5 29V19q0-2 2-2h18q2 0 2 2v10h-5v-6H10v6z" fill="#8cc6e8" stroke="#4c93c4"/><path d="M8 12v8M4 16h8M5.500 13.500l5 5M10.500 13.500l-5 5" stroke="#fff" stroke-width=".8"/></svg></button>
        <button class="ml-[18px]" aria-label="Opera"><svg class="w-[31px] h-[31px]" viewBox="0 0 32 31"><path fill-rule="evenodd" d="M16 0a15.500 15.500 0 1 0 0 31 15.500 15.500 0 0 0 0-31zm0 4c4 0 6.500 5 6.500 11.500S20 27 16 27 9.500 22 9.500 15.500 12 4 16 4z" fill="#e8192c"/></svg></button>
        <button class="ml-[30px]" aria-label="Chrome"><svg class="size-[31px]" viewBox="0 0 31 31"><circle cx="15.500" cy="15.500" r="15" fill="#fcd04b"/><path d="M2.500 8A15 15 0 0 1 28.500 8H15.500l-6 11z" fill="#dd4b3e"/><path d="M2.500 8A15 15 0 0 0 14 30.500L21 20l-11-1z" fill="#1e9e5a"/><path d="M14 30.500A15 15 0 0 0 28.500 8H15.500l6 11z" fill="#fcd04b"/><circle cx="15.500" cy="15.500" r="7" fill="#fff"/><circle cx="15.500" cy="15.500" r="5.500" fill="#4688f1"/></svg></button>
        <button class="ml-[18px] w-[58px] h-[38px] rounded-sm border border-[#bbb] bg-linear-to-b from-[#999] to-[#686868] flex items-center justify-center" aria-label="Firefox"><svg class="w-[31px] h-[31px]" viewBox="0 0 32 31"><defs><linearGradient id="fox" x1=".9" y1="0" x2=".1" y2=".9"><stop offset="0" stop-color="#fff03a"/><stop offset=".4" stop-color="#ff9a1a"/><stop offset="1" stop-color="#f0214c"/></linearGradient></defs><circle cx="16" cy="17" r="14" fill="url(#fox)"/><path d="M1 14C1 10 2 7 3 4l3 4 4-4 1 5-6 8zM20 0c5 3 12 7 11 18l-8 2c0-6-5-10-3-20z" fill="url(#fox)"/><path d="M8 10c3-4 10-5 13-1 4 5 2 12-3 13-4 1-7-1-8-3 3 1 5 0 6-2h-3c-3-1-4-3-2-5l3-1c0-1-4-2-6-1z" fill="#1b63dd"/><path d="M14 7c3 0 5 2 6 4" stroke="#38c5f5" stroke-width="2" fill="none"/></svg></button>
        <button class="ml-[18px]" aria-label="Steam"><svg class="size-[30px]" viewBox="0 0 30 30"><circle cx="15" cy="15" r="14.500" fill="#17386c"/><path d="M.5 15 10 19l6-7 5 5-7 5c-1 4-6 4-7 0L1 19z" fill="#fff"/><circle cx="20" cy="11.500" r="5" fill="#17386c" stroke="#fff" stroke-width="2"/><circle cx="20" cy="11.500" r="2.700" fill="#cfd8e4"/><circle cx="10.500" cy="21" r="2.500" fill="none" stroke="#17386c"/></svg></button>
        <button class="ml-8" aria-label="Spotify"><svg class="size-[30px]" viewBox="0 0 30 30"><circle cx="15" cy="15" r="14.800" fill="#1ed760"/><path d="M6 10c6-2 13-1.500 18.500 1.500M7 15c5-1.500 11-1 15.500 1.500M8 19.500c4-1 9-.7 12.500 1.500" fill="none" stroke="#191414" stroke-width="2.500" stroke-linecap="round"/></svg></button>
        <button class="ml-[34px]" aria-label="VLC"><svg class="w-[27px] h-[30px]" viewBox="0 0 27 30"><path d="M3 22h21l2.500 7.500h-26z" fill="#f2811d"/><path d="M12 0h3l7 24q-8 4-17 0z" fill="#f58220"/><path d="M10.300 6h6.400l1.700 6q-5 2-9.800 0zM7.500 16q6 2.500 12 0l1.500 5q-7 3-15 0z" fill="#eee"/></svg></button>
        <button class="ml-[33px]" aria-label="GIMP"><svg class="w-8 h-[26px]" viewBox="0 0 32 26"><path d="M2 12c4-1 5-3 9-3 5 0 9-1 14-8 3 5 2 11-1 16-3 5-9 5-14 3-5 0-8-3-8-8z" fill="#5d5850"/><path d="M6 17c6 3 12 2 17-2-1 5-8 7-13 5z" fill="#3b3832"/><circle cx="3.500" cy="12" r="3.500" fill="#1c1c1c"/><circle cx="11" cy="9.500" r="2.300" fill="#f4f4f4"/><circle cx="16" cy="9.500" r="2.600" fill="#f4f4f4"/><circle cx="11" cy="10" r="1.100" fill="#111"/><circle cx="16" cy="10" r="1.200" fill="#111"/><path d="M18 15l8 5" stroke="#d98a2b" stroke-width="2.500"/><path d="M25 18l6 7-7-3z" fill="#ccc"/></svg></button>
        <button class="ml-[15px] w-[58px] h-[38px] rounded-sm border border-white bg-linear-to-br from-[#eee] to-[#999] flex items-center justify-center" aria-label="InDesign"><span class="w-[29px] h-[27px] border-2 border-[#ff3d8f] bg-[#2b0312] text-[#ff3d8f] text-[16px] leading-[22px]">Id</span></button>
        <span class="ml-auto mr-[7px] text-[11px]">EN</span>
        <svg class="w-4 h-[15px] mr-[13px]" viewBox="0 0 16 15"><path d="M4 6c1-4 3 0 5-3s3-1 4-3" fill="none" stroke="#ccc"/><path d="M1 6h14v8H1z" fill="#ddd"/><path d="M2 8.500h12M2 10.500h12" stroke="#444" stroke-dasharray="1.500 1"/><path d="M4 12.500h8" stroke="#444"/></svg>
        <svg class="w-2 h-1 mr-[10px] mt-1.5" viewBox="0 0 8 4"><path d="M0 4h8L4 0z" fill="#fff"/></svg>
        <div class="w-[62px] text-center text-[11px] leading-[17px]">11:15 AM<br>10/29/2018</div>
        <button class="ml-1.5 w-[22px] h-[38px] border border-[#777] bg-linear-to-b from-[#666] via-[#181818] to-[#111]" aria-label="Show desktop"></button>
    </footer>

    <script>
        // number fields of the control panel
        document.querySelectorAll('[data-field]').forEach(el => {
            const d = el.dataset;
            const label = d.label ? `<label class="w-[14px] text-[11px] leading-5">${d.label}</label>` : '';
            const spinner = d.plain ? '' : `
                <span class="w-4 border-r border-[#929292] bg-[#b8b8b8] flex flex-col shrink-0">
                    <button class="flex-1 flex items-center justify-center" aria-label="Increase ${d.field}"><svg class="w-[9px] h-[9px]"><use href="#up"/></svg></button>
                    <button class="flex-1 flex items-center justify-center" aria-label="Decrease ${d.field}"><svg class="w-[9px] h-[9px]"><use href="#down"/></svg></button>
                </span>`;
            const menu = d.menu ? `<button class="w-[18px] shrink-0 border-l border-[#929292] bg-[#b8b8b8] flex items-center justify-center" aria-label="${d.field} menu"><svg class="size-[10px]"><use href="#${d.menu}"/></svg></button>` : '';
            el.innerHTML = `<div class="flex h-5">${label}
                <div class="flex-1 min-w-0 flex border border-[#929292] rounded-sm bg-[#dedede] overflow-hidden">${spinner}
                    <input aria-label="${d.field}" value="${d.value}" class="min-w-0 flex-1 pl-1 text-[#111] outline-none">${menu}
                </div></div>`;
        });

        // tool groups: [name, drawing, has flyout]
        const toolGroups = [
            [
                ['Selection', '<path d="M5 1v16l4-4h7z" fill="currentColor"/>'],
                ['Direct Selection', '<path d="M5.500 2v14l3.500-4h6z" fill="none" stroke="currentColor" stroke-width="1.300"/>'],
                ['Page', '<path d="M12.500 8V5L9 2H3.500v12H11M9 2v4h4" fill="none" stroke="currentColor" stroke-width="1.200"/><path d="M11 7v10l2.500-2.500H17z" fill="currentColor"/>'],
                ['Gap', '<path d="M1 2v14M17 2v14" stroke="currentColor" stroke-width="2"/><path d="M4 9h10" stroke="currentColor" stroke-width="1.500"/><path d="M7 5.500v7L3 9zM11 5.500v7L15 9z" fill="currentColor"/>'],
                ['Content Collector', '<path d="M2.500 6v10.500h13V6" fill="none" stroke="currentColor" stroke-width="1.700"/><path d="M5 10h9M5 13h9" stroke="currentColor" stroke-width="2" stroke-dasharray="2 1"/><path d="M4 1l4 4M9 1.500V6H4.500" fill="none" stroke="currentColor" stroke-width="1.500"/>', 1]
            ],
            [
                ['Type', '<path d="M2 2h14v4h-1.500L14 4h-3.800v11H12v1.300H6V15h1.800V4H4l-.5 2H2z" fill="currentColor"/>', 1],
                ['Line', '<path d="M2 16 16 2" stroke="currentColor" stroke-width="1.500"/>'],
                ['Pen', '<path d="M-1 4h8" stroke="currentColor" stroke-width="1.500"/><path d="M4 16c0-6 2-9 7-11l4 4c-1 5-4 7-11 7z" fill="currentColor"/><path d="M12 3l3-2 4 4-2 3z" fill="currentColor"/><path d="M5 15l5-5" stroke="#b8b8b8"/>', 1],
                ['Pencil', '<path d="M2 16l1.500-5 7.500-7 4 4-7.500 7zM12 3l2-2 3.500 3.500-2 2z" fill="currentColor"/>', 1],
                ['Rectangle Frame', '<path d="M1.500 2.500h15v13h-15zM2 3l14 12M16 3 2 15" fill="none" stroke="currentColor" stroke-width="1.200"/>', 1],
                ['Rectangle', '<path d="M1.500 2.500h15v13h-15z" fill="#a0a0a0" stroke="currentColor"/>', 1]
            ],
            [
                ['Scissors', '<path d="M1 5l12 6M1 13l12-7" stroke="currentColor" stroke-width="2"/><circle cx="14.500" cy="4" r="2.500" fill="none" stroke="currentColor" stroke-width="1.400"/><circle cx="14.500" cy="14" r="2.500" fill="none" stroke="currentColor" stroke-width="1.400"/>'],
                ['Free Transform', '<path d="M6 4h12v11H6z" fill="none" stroke="currentColor" stroke-width="1.300" stroke-dasharray="4 1"/><path d="M16.500 2.500h3v3h-3zM16.500 13.500h3v3h-3zM5 13.500h3v3H5zM0 1v13l3-3h6z" fill="currentColor"/>', 1],
                ['Gradient Swatch', '<path d="M1.500 2.500h15v13h-15z" fill="url(#grad)" stroke="#333"/>'],
                ['Gradient Feather', '<path d="M1.500 2.500h15v13h-15z" fill="url(#feather)" stroke="#555"/><path d="M2 4.500h14M4 7.500h12" stroke="#a4a4a4" stroke-width="2" stroke-dasharray="2 2"/>']
            ],
            [
                ['Note', '<path d="M2 2h14v9l-5 5H2z" fill="currentColor"/><path d="M4 5.500h10M4 8.500h10M4 11.500h5" stroke="#b8b8b8" stroke-width="1.200"/><path d="M12 16v-4h4z" fill="currentColor" stroke="#b8b8b8"/>'],
                ['Color Theme', '<path d="M11 6 3 14l-1.500 3L5 15.500 13 8" fill="none" stroke="currentColor" stroke-width="1.300"/><path d="M9 4l6 6 1-3 1-4-3-2-3 1z" fill="currentColor"/><path d="M9.500 13.500h9v3h-9zM12.500 13.500v3M15.500 13.500v3" fill="#999" stroke="currentColor"/>', 1],
                ['Hand', '<path d="M6 17C4 14 2 11 1 9c1-1 2-1 4 1L4 3c1-1 2 0 2.500 1L8 8V1.500c1-1 2-.5 2 .5v6l2-5.500c1-.5 2 0 1.500 1.500L13 9l2-3c1-.5 1.500.5 1.500 1L14 14v3z" fill="currentColor"/>'],
                ['Zoom', '<circle cx="7.500" cy="7" r="5.800" fill="#c4c4c4" stroke="currentColor" stroke-width="1.400"/><path d="M11.500 11l5.500 6" stroke="currentColor" stroke-width="2.200"/>']
            ]
        ];
        document.getElementById('tools').innerHTML =
            toolGroups.map(group => `<div class="flex flex-col">` + group.map(([name, art, flyout]) => `
                <button aria-label="${name}" class="${name === 'Selection' ? 'relative w-[30px] h-6 flex items-center justify-center rounded-sm border border-[#888] bg-[#989898] text-[#222]' : 'relative w-[30px] h-6 flex items-center justify-center'}">
                    <svg class="size-[18px] overflow-visible" viewBox="0 0 18 18">${art}</svg>
                    ${flyout ? '<svg class="absolute right-0.5 bottom-0 size-[3px]"><use href="#corner"/></svg>' : ''}
                </button>`).join('') + `</div>`).join('');

        // panel dock
        const panelGroups = [
            [
                ['Pages', '<path d="M1 8l5-5h3v14H1zM11 3h3l5 5v9h-8z" fill="currentColor"/><path d="M10 1v18" stroke="currentColor"/><path d="M3 7h3V4M17 7h-3V4" fill="none" stroke="#b8b8b8"/>'],
                ['Layers', '<path d="M10 1l9 6-9 6-9-6zM1 11.500l3-1.500 6 4 6-4 3 1.500-9 6z" fill="currentColor"/>'],
                ['Links', '<use href="#links" y="3" width="20" height="12"/>']
            ],
            [
                ['Stroke', '<path d="M1 3h18v1H1zM1 7h18v2H1zM1 12h18v3H1z" fill="currentColor"/>'],
                ['Swatches', '<path d="M1.500 4.500h16v10h-16z" fill="#888" stroke="#333"/><path d="M7 5h5v4H7zM12 10h5v4h-5z" fill="#444"/><path d="M6.500 5v9M12 5v9M2 9.500h15" stroke="#333"/>'],
                ['Gradient', '<path d="M1.500 3.500h17v11h-17z" fill="url(#grad)" stroke="#222"/>'],
                ['CC Libraries', '<rect x="-.5" y="4" width="21" height="13" rx="6.500" fill="#404040"/><circle cx="13" cy="9.500" r="7" fill="#404040"/><g fill="none" stroke="#b8b8b8" stroke-width="1.200"><path d="M11.500 12 8 8.500A3.600 3.600 0 1 0 6 15H14a5 5 0 1 0-4.500-7.500l4.500 4.500"/></g>']
            ],
            [
                ['Effects', '<text x="3" y="15" font-size="17" font-style="italic" font-weight="400" fill="currentColor">fx</text>'],
                ['Object Styles', '<path d="M4.500 8V2.500h14v13h-7" fill="none" stroke="currentColor" stroke-width="1.300" stroke-dasharray="5 1"/><use href="#mini" x="0" y="8" width="11" height="11"/>']
            ],
            [
                ['Paragraph Styles', '<path d="M12 2h6v1.300h-1V16h-1.200V3.300H14V16h-1.200V9.500A3.800 3.800 0 0 1 12 2z" fill="currentColor"/><path d="M8 5a3.500 3.500 0 0 1 4-3v8a4 4 0 0 1-4-5z" fill="currentColor"/><use href="#mini" x="0" y="8" width="11" height="11"/>']
            ],
            [
                ['Character Styles', '<text x="8" y="14" font-size="16" font-weight="600" fill="currentColor">A</text><use href="#mini" x="0" y="8" width="11" height="11"/>']
            ]
        ];
        document.getElementById('panels').innerHTML = panelGroups.map(group => `
            <div class="relative pt-[10px] pb-0.5 border-b border-[#929292]">
                <svg class="absolute left-[72px] top-1 w-5 h-1"><use href="#griph"/></svg>
                ${group.map(([name, art]) => `<button class="flex items-center h-7 w-full pl-[9px] gap-2"><svg class="size-5 shrink-0 overflow-visible text-[#404040]" viewBox="0 0 20 20">${art}</svg>${name}</button>`).join('')}
            </div>`).join('');

        // rulers, 20 units apart
        const scale = 1.96;
        let x = '', y = '';
        for (let v = 0; v <= 855; v += 5) {
            const p = Math.round(5 + v * scale) + 0.5;
            const len = v % 20 === 0 ? 15 : v % 10 === 0 ? 4 : 2;
            x += `<path d="M${p} ${15 - len}V15" stroke="#111"/>`;
            if (v % 20 === 0) x += `<text x="${p + 2}" y="10" fill="#111">${v}</text>`;
        }
        document.getElementById('rulerX').innerHTML = x + '<path d="M0 15.500h1700" stroke="#111"/><path d="M847.500 0v15" stroke="#111" stroke-dasharray="1 1"/>';
        for (let v = -65; v <= 380; v += 5) {
            const p = Math.round(134 + v * scale) + 0.5;
            const len = v % 20 === 0 ? 15 : v % 10 === 0 ? 4 : 2;
            y += `<path d="M${15 - len} ${p}H15" stroke="#111"/>`;
            if (v % 20 === 0) String(Math.abs(v)).split('').forEach((c, i) => {
                y += `<text x="2" y="${p + 9 + i * 9}" fill="#111">${c}</text>`;
            });
        }
        document.getElementById('rulerY').innerHTML = y + '<path d="M15.500 0v900" stroke="#111"/><path d="M0 574.500h15" stroke="#111" stroke-dasharray="1 1"/>';

        // selection handles
        let handles = '';
        [388, 868, 1348].forEach(hx => [278, 576, 874].forEach(hy => {
            if (hx !== 868 || hy !== 576) handles += `<path d="M${hx - 2.5} ${hy - 2.5}h6v6h-6z"/>`;
        }));
        document.getElementById('handles').innerHTML = handles;
    </script>
</body>
</html>
